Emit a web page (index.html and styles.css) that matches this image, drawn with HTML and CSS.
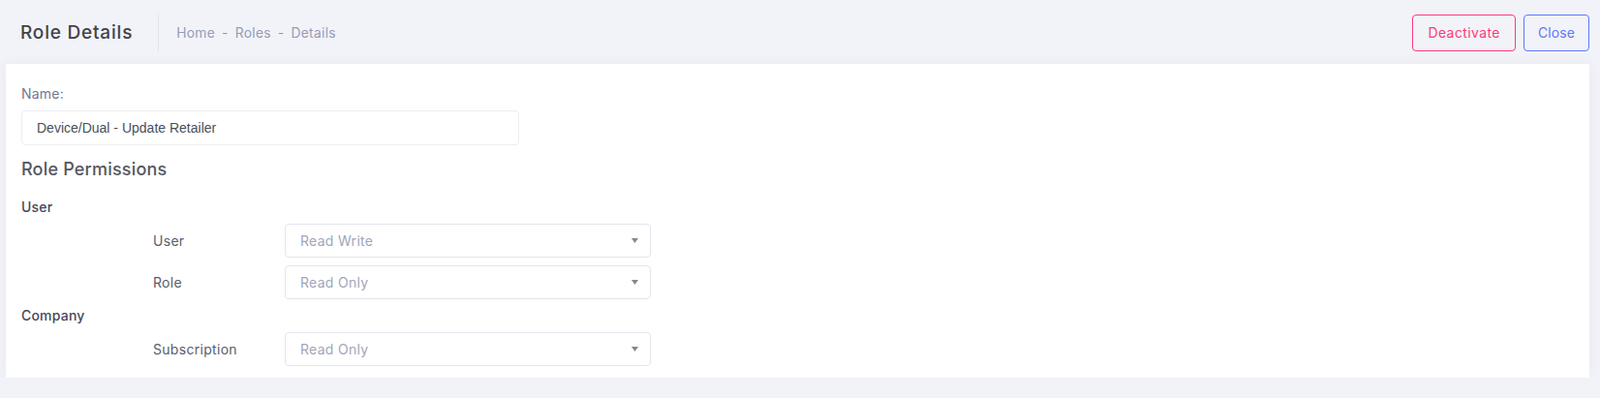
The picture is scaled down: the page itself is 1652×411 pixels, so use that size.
FILE: index.html
```html
<!DOCTYPE html>
<html lang="en">
<head>
<meta charset="utf-8">
<title>Role Details</title>
<link rel="stylesheet" href="styles.css">
</head>
<body>
<div class="page">
  <header class="subheader">
    <h3 class="title">Role Details</h3>
    <span class="divider"></span>
    <nav class="breadcrumb">
      <span>Home</span><span class="sep">-</span><span>Roles</span><span class="sep">-</span><span>Details</span>
    </nav>
    <div class="actions">
      <button class="btn btn-danger">Deactivate</button>
      <button class="btn btn-brand">Close</button>
    </div>
  </header>
  <section class="card">
    <label class="field-label" for="name">Name:</label>
    <input class="text-input" id="name" type="text" value="Device/Dual - Update Retailer">
    <h4 class="section-title">Role Permissions</h4>

    <div class="group-label">User</div>
    <div class="perm-row">
      <span class="perm-label">User</span>
      <div class="select"><span>Read Write</span><svg class="caret" width="7" height="5" viewBox="0 0 7 5"><path d="M0 0H7L3.5 5Z" fill="#888"/></svg></div>
    </div>
    <div class="perm-row">
      <span class="perm-label">Role</span>
      <div class="select"><span>Read Only</span><svg class="caret" width="7" height="5" viewBox="0 0 7 5"><path d="M0 0H7L3.5 5Z" fill="#888"/></svg></div>
    </div>

    <div class="group-label group-gap">Company</div>
    <div class="perm-row">
      <span class="perm-label">Subscription</span>
      <div class="select"><span>Read Only</span><svg class="caret" width="7" height="5" viewBox="0 0 7 5"><path d="M0 0H7L3.5 5Z" fill="#888"/></svg></div>
    </div>
  </section>
</div>
</body>
</html>
```

FILE: styles.css
```css
* { box-sizing: border-box; }

body {
  margin: 0;
  background: #f2f3f8;
  font-family: Inter, "Open Sans", sans-serif;
  color: #595d6e;
}

.page {
  padding: 0 11px 0 6px;
}

.subheader {
  display: flex;
  align-items: center;
  height: 66px;
  padding-left: 15px;
  padding-top: 1px;
}

.title {
  margin: 0;
  font-size: 19px;
  font-weight: 500;
  color: #434349;
  letter-spacing: 0.8px;
}

.divider {
  width: 1px;
  height: 40px;
  background: #e4e5ec;
  margin: 0 18px 0 26px;
}

.breadcrumb {
  display: flex;
  font-size: 13.8px;
  color: #959cb6;
  letter-spacing: 0.3px;
}

.breadcrumb .sep {
  margin: 0 7px;
}

.actions {
  margin-left: auto;
  display: flex;
  gap: 8px;
}

.btn {
  height: 38px;
  padding: 0 15px;
  border: 1px solid;
  border-radius: 4px;
  background: transparent;
  font-family: inherit;
  font-size: 14px;
  letter-spacing: 0.4px;
  cursor: pointer;
}

.btn-danger {
  color: #fd397a;
  border-color: #fd397a;
}

.btn-brand {
  color: #5d78ff;
  border-color: #5d78ff;
  padding: 0 14px;
  letter-spacing: 0.1px;
}

.card {
  background: #fff;
  padding: 21px 16px 12px;
  box-shadow: 0 0 13px 0 rgba(82, 63, 105, 0.06);
}

.field-label {
  display: block;
  height: 20px;
  line-height: 20px;
  font-size: 14px;
  letter-spacing: 0.2px;
  color: #74788d;
}

.text-input {
  display: block;
  margin-top: 7px;
  width: 514px;
  height: 36px;
  padding: 0 15px;
  border: 1px solid #ebedf2;
  border-radius: 4px;
  font-family: "Liberation Sans", Arial, sans-serif;
  font-size: 14px;
  color: #495057;
  outline: none;
}

.section-title {
  margin: 13px 0 0;
  height: 24px;
  line-height: 24px;
  font-size: 18px;
  font-weight: 500;
  letter-spacing: 0.2px;
  color: #55565f;
}

.group-label {
  margin-top: 17px;
  height: 20px;
  line-height: 20px;
  font-size: 14px;
  font-weight: 500;
  letter-spacing: 0.2px;
  color: #48465b;
}

.group-label.group-gap {
  margin-top: 7px;
}

.perm-row {
  display: flex;
  align-items: center;
  margin-top: 7px;
  padding-left: 136px;
}

.perm-row + .perm-row {
  margin-top: 8px;
}

.perm-label {
  width: 136px;
  font-size: 14px;
  letter-spacing: 0.3px;
  color: #595d6e;
}

.select {
  display: flex;
  align-items: center;
  justify-content: space-between;
  width: 378px;
  height: 35px;
  padding: 0 12px 0 15px;
  border: 1px solid #e2e5ec;
  border-radius: 4px;
  font-size: 14px;
  letter-spacing: 0.3px;
  color: #a2a5b9;
}

.caret {
  display: block;
}
```
